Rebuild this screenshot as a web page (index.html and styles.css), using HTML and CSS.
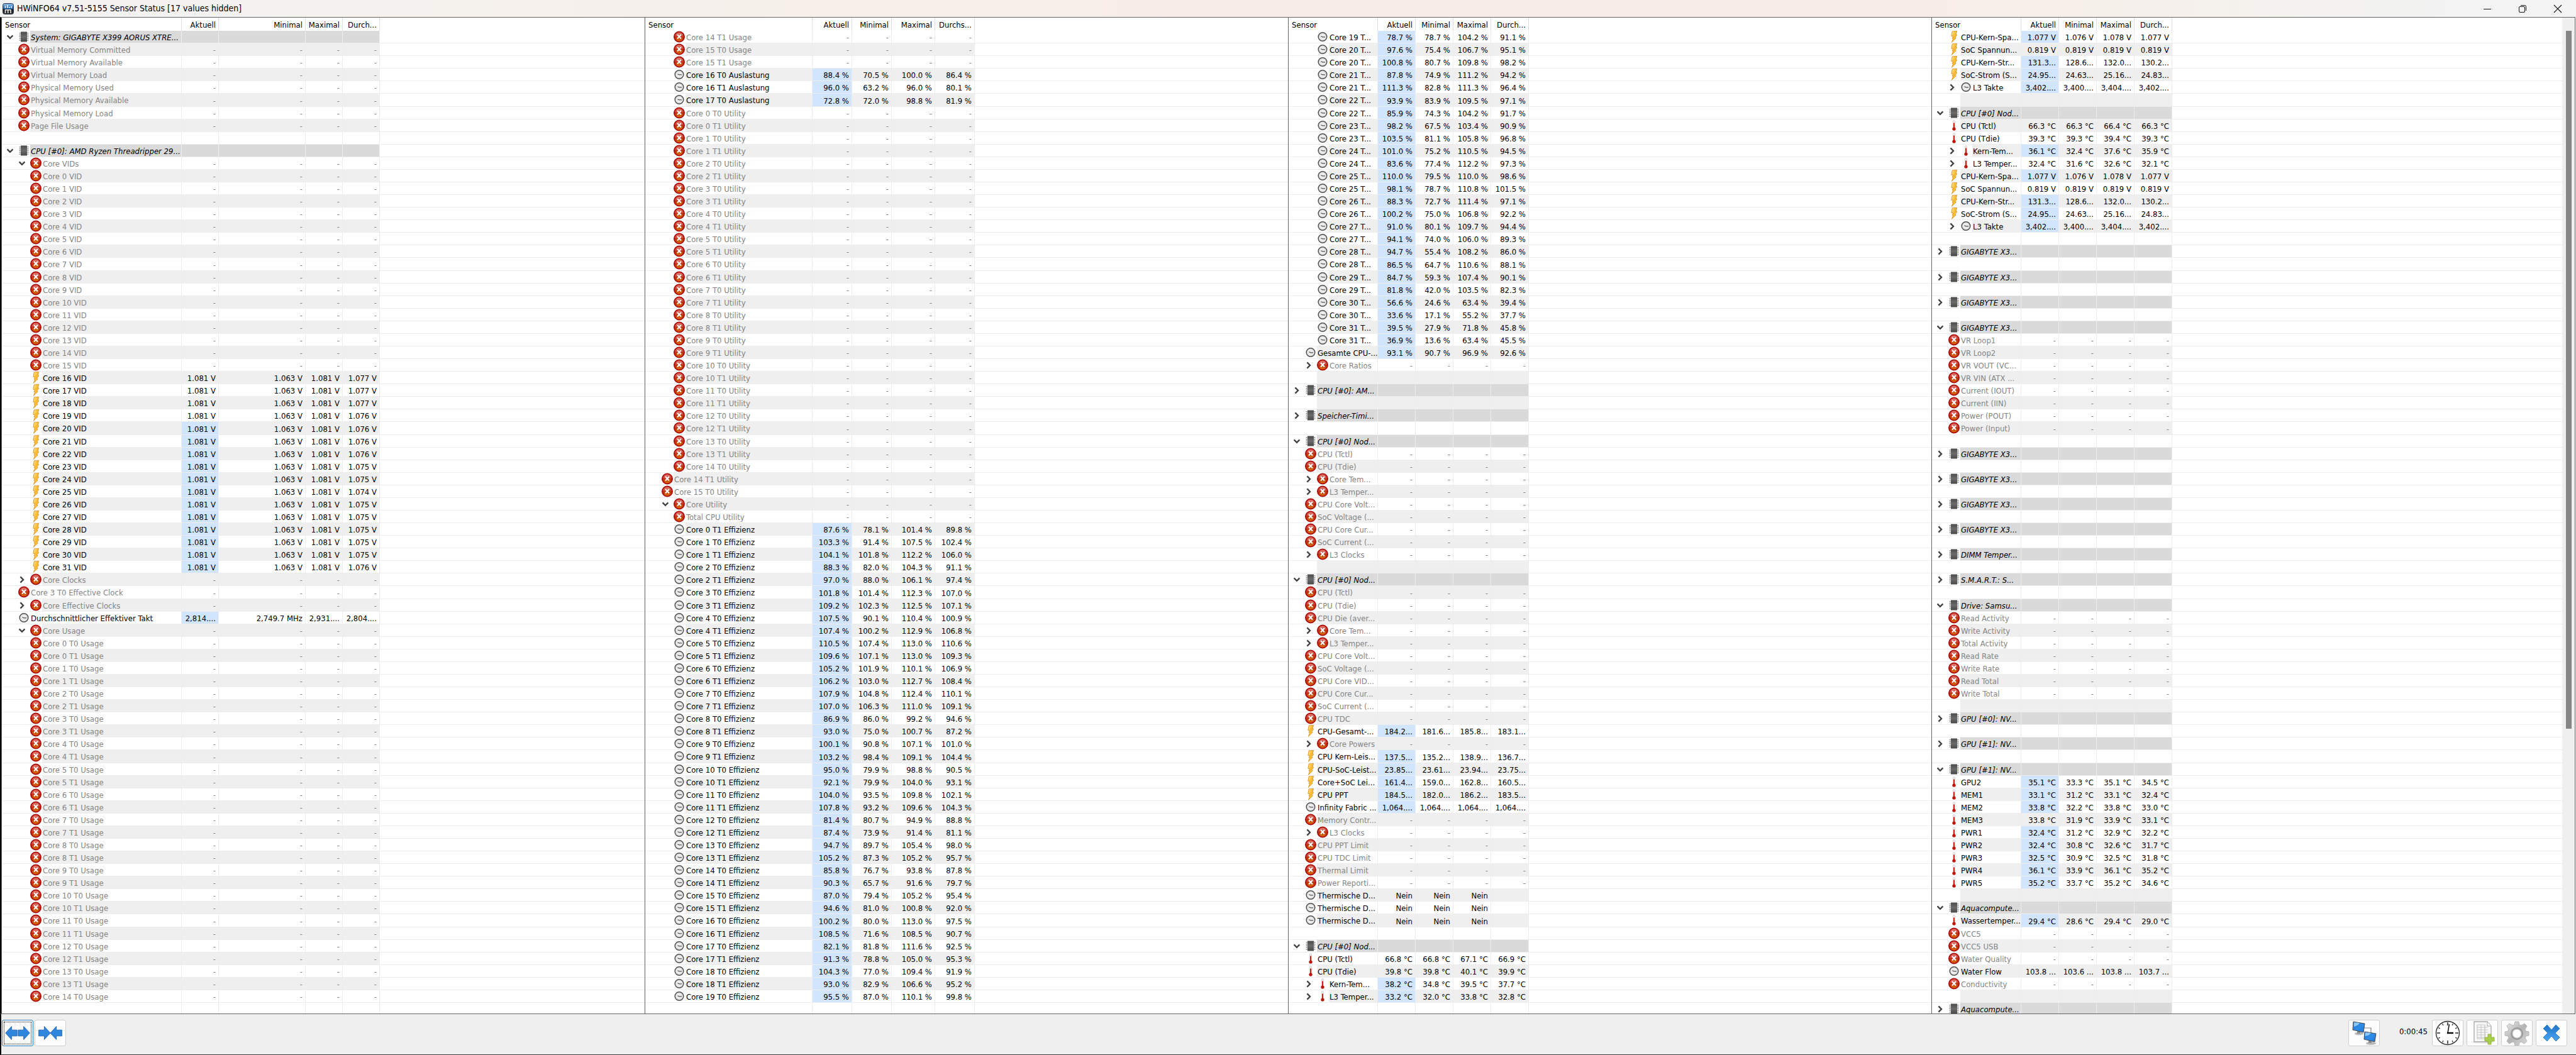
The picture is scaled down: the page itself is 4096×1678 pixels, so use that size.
FILE: index.html
```html
<!DOCTYPE html>
<html lang="de">
<head>
<meta charset="utf-8">
<title>HWiNFO64 v7.51-5155 Sensor Status</title>
<link rel="stylesheet" href="styles.css">
</head>
<body>
<svg class="sprite" aria-hidden="true">
  <defs>
    <linearGradient id="gRed" x1="0" y1="0" x2="0" y2="1"><stop offset="0" stop-color="#e58a80"/><stop offset=".48" stop-color="#c8392b"/><stop offset=".52" stop-color="#b83200"/><stop offset="1" stop-color="#e07a10"/></linearGradient>
    <linearGradient id="gBolt" x1="0" y1="0" x2="1" y2="1"><stop offset="0" stop-color="#ffe9a0"/><stop offset=".5" stop-color="#fcb829"/><stop offset="1" stop-color="#fff0a0"/></linearGradient>
    <linearGradient id="gChip" x1="0" y1="0" x2="0" y2="1"><stop offset="0" stop-color="#4c4c4c"/><stop offset=".5" stop-color="#6a6a6a"/><stop offset="1" stop-color="#484848"/></linearGradient>
    <linearGradient id="gBlue" x1="0" y1="0" x2="0" y2="1"><stop offset="0" stop-color="#1f74c8"/><stop offset="1" stop-color="#4ba6f5"/></linearGradient>
    <linearGradient id="gScreen" x1="0" y1="0" x2="1" y2="1"><stop offset="0" stop-color="#1670cf"/><stop offset=".5" stop-color="#2f8de6"/><stop offset="1" stop-color="#1d78dc"/></linearGradient>
    <linearGradient id="gGear" x1="0" y1="0" x2="1" y2="1"><stop offset="0" stop-color="#ececec"/><stop offset=".5" stop-color="#b4b4b4"/><stop offset="1" stop-color="#dedede"/></linearGradient>
    <linearGradient id="gApp" x1="0" y1="0" x2="0" y2="1"><stop offset="0" stop-color="#8fc0ea"/><stop offset=".5" stop-color="#1c5ea8"/><stop offset=".55" stop-color="#1a1a1a"/><stop offset="1" stop-color="#333"/></linearGradient>
  </defs>
  <symbol id="i-x" viewBox="0 0 18 18"><circle cx="9" cy="9" r="8" fill="url(#gRed)" stroke="#b00d0a" stroke-width="2"/><path d="M6 5.6l6 6.4M12 5.6L6 12" stroke="#fff" stroke-width="2.2" fill="none"/></symbol>
  <symbol id="i-k" viewBox="0 0 18 18"><circle cx="9" cy="9" r="6.8" fill="#ececec" stroke="#4e4e4e" stroke-width="1.5"/><circle cx="9" cy="9" r="5.2" fill="none" stroke="#bdbdbd" stroke-width="1" stroke-dasharray="1 1.7"/><path d="M6.3 8.2L9 9.3h4" stroke="#555" stroke-width="1.2" fill="none"/></symbol>
  <symbol id="i-b" viewBox="0 0 18 18"><path d="M6.2 .4L13.6 0L12 5.6L13.8 6L10.6 10.6L12.3 11.2L5.4 17.8L7.6 12L6 11.4L7.6 8.4L4.8 7.8Z" fill="url(#gBolt)" stroke="#d98a1c" stroke-width=".8"/></symbol>
  <symbol id="i-t" viewBox="0 0 18 18"><rect x="7.3" y="1" width="3.4" height="13" rx="1.7" fill="#ececec" stroke="#c4c4c4" stroke-width=".6"/><path d="M9 5v9" stroke="#cf2512" stroke-width="2"/><circle cx="9" cy="14.6" r="2.7" fill="#be150c"/></symbol>
  <symbol id="i-c" viewBox="0 0 18 18"><path d="M2.6 2.5v14M15.4 2.5v14" stroke="#888" stroke-width="2" stroke-dasharray="1.6 1.2"/><rect x="4" y="1" width="10" height="16" fill="url(#gChip)"/></symbol>
  <symbol id="i-open" viewBox="0 0 12 12"><path d="M1.6 3.4L6 7.8L10.4 3.4" fill="none" stroke="#424242" stroke-width="2.4"/></symbol>
  <symbol id="i-shut" viewBox="0 0 12 12"><path d="M3.4 1.4L8 6L3.4 10.6" fill="none" stroke="#424242" stroke-width="2.4"/></symbol>
</svg>

<header class="titlebar">
  <svg class="app-icon" viewBox="0 0 18 18"><rect x=".5" y=".5" width="17" height="17" rx="3" fill="url(#gApp)" stroke="#2a3a4c"/><path d="M4.5 8V4.500M8 8V3M11 8V6M14 8V4.500" stroke="#fff" stroke-width="1.400"/><path d="M4.500 16v-5.200h8.500V16M8.700 11v5" stroke="#e8e8e8" stroke-width="1.600" fill="none"/></svg>
  <h1 class="title">HWiNFO64 v7.51-5155 Sensor Status [17 values hidden]</h1>
  <div class="window-controls">
    <button aria-label="Minimieren"><svg viewBox="0 0 14 14"><path d="M1 7.500h12" stroke="#111"/></svg></button>
    <button aria-label="Wiederherstellen"><svg viewBox="0 0 14 14" fill="none" stroke="#111"><rect x="1.500" y="3.500" width="9" height="9" rx="1.500"/><path d="M4 1.500h6.500a2 2 0 0 1 2 2V10"/></svg></button>
    <button aria-label="Beenden"><svg viewBox="0 0 14 14"><path d="M1 1l12 12M13 1L1 13" stroke="#111" stroke-width="1.200"/></svg></button>
  </div>
</header>

<main class="panes">
  <section class="pane pane-wide-min" id="pane1"></section>
  <section class="pane pane-wide-max" id="pane2"></section>
  <section class="pane pane-narrow" id="pane3"></section>
  <section class="pane pane-narrow" id="pane4"></section>
</main>

<footer class="toolbar">
  <button class="tool tool-focus" aria-label="Mehr Spalten"><svg viewBox="0 0 48 32"><path d="M2 16L13 4v6.500h10v11H13V28Z M46 16L35 4v6.500H25v11h10V28Z" fill="#2f86dc" stroke="#1c62b4"/></svg></button>
  <button class="tool" aria-label="Weniger Spalten"><svg viewBox="0 0 48 32"><path d="M24 16L13 4v6.500H3v11h10V28Z M24 16L35 4v6.500h10v11H35V28Z" fill="#2f86dc" stroke="#1c62b4"/></svg></button>
  <span class="spacer"></span>
  <button class="tool" aria-label="Netzwerk"><svg viewBox="0 0 40 40"><path d="M19 12h12v10" fill="none" stroke="#8a8a8a" stroke-width="1.200"/><ellipse cx="12" cy="21" rx="7" ry="2.500" fill="#b9b9b9"/><path d="M9 16l5 1v4H9Z" fill="#8f8f8f"/><path d="M3 2l18 3-2 14L2 15Z" fill="url(#gScreen)" stroke="#4a4a4a"/><path d="M3.500 10Q11 8 13 4L4 3Z" fill="#8cc8fa"/><ellipse cx="31" cy="36.500" rx="8" ry="2.500" fill="#b9b9b9"/><path d="M27 31l5 1v4h-5Z" fill="#8f8f8f"/><path d="M21 18l18 3-2 13-17-4Z" fill="url(#gScreen)" stroke="#4a4a4a"/><path d="M21.500 25Q29 24 31 20l-9-1Z" fill="#8cc8fa"/></svg></button>
  <span class="elapsed">0:00:45</span>
  <button class="tool" aria-label="Zurücksetzen"><svg viewBox="0 0 40 40"><circle cx="20" cy="20" r="18.500" fill="#fff" stroke="#222" stroke-width="1.300"/><path d="M20 3v5M20 32v5M3 20h5M32 20h5" stroke="#222" stroke-width="1.500"/><path d="M11.500 5.300l1.500 2.500M28.500 5.300L27 7.800M11.500 34.700l1.500-2.500M28.500 34.700L27 32.200M5.300 11.500L7.800 13M5.300 28.500L7.800 27M34.700 11.500L32.200 13M34.700 28.500L32.200 27" stroke="#222" stroke-width="1.200"/><path d="M20 20L22.500 6" stroke="#111" stroke-width="1.500"/><path d="M19 20h10" stroke="#000" stroke-width="2.400"/></svg></button>
  <button class="tool" aria-label="Protokoll"><svg viewBox="0 0 40 40"><ellipse cx="20" cy="34" rx="18" ry="3" fill="#ececec"/><path d="M7 2h21l6 7v25H7Z" fill="#f7f7f7" stroke="#a8a8a8" stroke-width="1.300"/><path d="M28 2v7h6" fill="#fff" stroke="#a8a8a8"/><path d="M12 7h12v22H12ZM12 11h17M12 15h17M12 19h17M12 23h14M12 27h12M18 7v22M24 7v22" fill="none" stroke="#c6c6c6"/><path d="M29 22h5v5h5v6h-5v5h-5v-5h-5v-6h5Z" fill="#a9cf4e" stroke="#93b83a"/></svg></button>
  <button class="tool" aria-label="Einstellungen"><svg viewBox="0 0 40 40"><path fill-rule="evenodd" d="M17 2h6l1 5 3 1 5-3 4 4-3 5 1 3 5 1v6l-5 1-1 3 3 5-4 4-5-3-3 1-1 5h-6l-1-5-3-1-5 3-4-4 3-5-1-3-5-1v-6l5-1 1-3-3-5 4-4 5 3 3-1ZM20 14a7 7 0 1 0 .1 0Z" fill="url(#gGear)" stroke="#a8a8a8" stroke-width=".8"/><circle cx="20" cy="21" r="9" fill="none" stroke="#8f8f8f" stroke-width="1.400"/></svg></button>
  <button class="tool" aria-label="Schließen"><svg viewBox="0 0 40 40"><path d="M13 7l7 8 7-8 6 6-7 7 7 7-6 6-7-8-7 8-6-6 7-7-7-7Z" fill="url(#gBlue)" stroke="#1f6fc0" stroke-width=".8"/></svg></button>
</footer>
<script src="sensors.js"></script>
</body>
</html>
```
FILE: styles.css
```css
* {
  box-sizing: border-box;
}

body {
  margin: 0;
  height: 100vh;
  display: flex;
  flex-direction: column;
  overflow: hidden;
  background: #efefef;
  color: #000;
  font: 13px/17px "DejaVu Sans Condensed", "Noto Sans", sans-serif;
}

button {
  margin: 0;
  padding: 0;
  border: 0;
  background: none;
}

.sprite {
  position: absolute;
  width: 0;
  height: 0;
}

/* title bar */
.titlebar {
  flex: none;
  height: 27px;
  display: flex;
  align-items: center;
  gap: 5px;
  padding: 0 1px 0 4px;
  background: linear-gradient(90deg, #f3f3f2, #f8eee7 45%, #f8eee7 75%, #f2f3f2 95%);
}

.app-icon {
  width: 18px;
  height: 18px;
}

.title {
  flex: 1;
  margin: 0;
  font-size: 14px;
  font-weight: normal;
}

.window-controls {
  display: flex;
}

.window-controls button {
  width: 56px;
  height: 26px;
  display: grid;
  place-items: center;
}

.window-controls svg {
  width: 14px;
  height: 14px;
}

/* sensor panes */
.panes {
  flex: 1;
  min-height: 0;
  display: grid;
  grid-template-columns: repeat(4, minmax(0, 1fr));
  margin-right: 1px;
  border: 1px solid #646464;
  border-left: 2px solid #000;
  background: #fff;
}

.pane {
  display: flex;
  align-items: flex-start;
  overflow: hidden;
  border-left: 1px solid #646464;
}

.sensors {
  flex: 1;
  width: 100%;
  min-width: 0;
  table-layout: fixed;
  border-collapse: separate;
  border-spacing: 0;
}

.sensors col { width: 60px; }
.sensors col.c-name { width: 142px; }
.sensors col.c-rest { width: auto; }
.pane-wide-min col { width: 59px; }
.pane-wide-min col.c-name { width: 286px; }
.pane-wide-min col.c-min { width: 138px; }
.pane-wide-max col { width: 63px; }
.pane-wide-max col.c-name { width: 266px; }
.pane-wide-max col.c-max { width: 69px; }

.sensors th,
.sensors td {
  height: 20px;
  padding: 2px 4px 0 0;
  border: 0 solid #ededed;
  border-width: 0 1px 1px 0;
  font-weight: normal;
  text-align: right;
  white-space: nowrap;
  overflow: hidden;
}

.sensors tbody tr:nth-child(13n + 6) td {
  height: 21px;
}

.sensors thead th {
  height: 21px;
  border-color: #e0e0e0;
  border-bottom: 0;
}

.sensors thead th:first-child {
  padding-left: 5px;
  text-align: left;
}

.sensors th:last-child,
.sensors td:last-child {
  border-right: 0;
}

.sensors td:first-child {
  padding: 0;
  text-align: left;
}

.entry {
  display: flex;
  align-items: stretch;
  height: 100%;
  min-height: 19px;
}

.level-1 {
  padding-left: 19px;
}

.twisty {
  flex: none;
  width: 25px;
  display: grid;
  place-items: center;
}

.twisty svg {
  width: 12px;
  height: 12px;
}

.icon {
  flex: none;
  width: 20px;
  height: 19px;
  padding: 0 1px;
}

.label {
  flex: 1;
  padding: 2px 0 0 1px;
}

.stripe .label,
.stripe .value {
  background: #efefef;
}

.group .label,
.group .value {
  background: #dadada;
}

.group .label {
  font-style: italic;
}

.off {
  color: #848484;
}

.sensors .hot {
  background: #d1e5fe;
}

/* scroll bar of the last pane */
.scrollbar {
  flex: none;
  align-self: stretch;
  width: 20px;
  padding: 21px 5px 0 6px;
  background: #efefef;
}

.thumb {
  height: 71%;
  background: #858585;
}

/* bottom toolbar */
.toolbar {
  flex: none;
  display: flex;
  align-items: center;
  gap: 5px;
  padding: 9px 14px 13px 1px;
  border-left: 2px solid #000;
  border-bottom: 1px solid #3c3c3c;
}

.tool {
  width: 50px;
  height: 42px;
  display: grid;
  place-items: center;
  border: 1px solid #cfcfcf;
  border-radius: 3px;
  background: #fdfdfd;
}

.tool svg {
  width: 42px;
  height: 40px;
}

.tool-focus {
  margin-right: -3px;
  border-color: #2d7cc4;
  outline: 1px dotted #000;
  outline-offset: -4px;
}

.spacer {
  flex: 1;
}

.elapsed {
  margin: 0 2px 6px 26px;
}
```
FILE: sensors.js
```js
// Row notation: twisty (v open, > closed, . none), icon (c chip, x disabled,
// b voltage, k clock, t temperature), level, name | current | min | max | average.
// "*" marks a value that just changed, "~" a closed group with an odd number of
// hidden rows (the striping runs on through them), "-" a spacer, "/" the list end.

const cores = (from, to, make) => {
  const rows = [];
  for (let i = from; i <= to; i++) rows.push(make(i >> 1, i & 1));
  return rows.join('\n');
};

const vids = ['77', '77', '77', '76', '76', '76', '76', '75', '75', '74', '75', '75', '75', '75', '75', '76'];

const pane1 = `vc0 System: GIGABYTE X399 AORUS XTRE...
.x0 Virtual Memory Committed
.x0 Virtual Memory Available
.x0 Virtual Memory Load
.x0 Physical Memory Used
.x0 Physical Memory Available
.x0 Physical Memory Load
.x0 Page File Usage
-
vc0 CPU [#0]: AMD Ryzen Threadripper 29...
vx1 Core VIDs
${Array.from({ length: 16 }, (_, i) => `.x1 Core ${i} VID`).join('\n')}
${vids.map((v, i) => `.b1 Core ${i + 16} VID|1.081 V${i > 3 ? '*' : ''}|1.063 V|1.081 V|1.0${v} V`).join('\n')}
>x1 Core Clocks
.x0 Core 3 T0 Effective Clock
>x1 Core Effective Clocks
.k0 Durchschnittlicher Effektiver Takt|2,814....*|2,749.7 MHz|2,931....|2,804....
vx1 Core Usage
${cores(0, 28, (c, t) => `.x1 Core ${c} T${t} Usage`)}
/`;

const efficiency = `87.6 78.1 101.4 89.8
103.3 91.4 107.5 102.4
104.1 101.8 112.2 106.0
88.3 82.0 104.3 91.1
97.0 88.0 106.1 97.4
101.8 101.4 112.3 107.0
109.2 102.3 112.5 107.1
107.5 90.1 110.4 100.9
107.4 100.2 112.9 106.8
110.5 107.4 113.0 110.6
109.6 107.1 113.0 109.3
105.2 101.9 110.1 106.9
106.2 103.0 112.7 108.4
107.9 104.8 112.4 110.1
107.0 106.3 111.0 109.1
86.9 86.0 99.2 94.6
93.0 75.0 100.7 87.2
100.1 90.8 107.1 101.0
103.2 98.4 109.1 104.4
95.0 79.9 98.8 90.5
92.1 79.9 104.0 93.1
104.0 93.5 109.8 102.1
107.8 93.2 109.6 104.3
81.4 80.7 94.9 88.8
87.4 73.9 91.4 81.1
94.7 89.7 105.4 98.0
105.2 87.3 105.2 95.7
85.8 76.7 93.8 87.8
90.3 65.7 91.6 79.7
87.0 79.4 105.2 95.4
94.6 81.0 100.8 92.0
100.2 80.0 113.0 97.5
108.5 71.6 108.5 90.7
82.1 81.8 111.6 92.5
91.3 78.8 105.0 95.3
104.3 77.0 109.4 91.9
93.0 82.9 106.6 95.2
95.5 87.0 110.1 99.8
78.7 78.7 104.2 91.1
97.6 75.4 106.7 95.1
100.8 80.7 109.8 98.2
87.8 74.9 111.2 94.2
111.3 82.8 111.3 96.4
93.9 83.9 109.5 97.1
85.9 74.3 104.2 91.7
98.2 67.5 103.4 90.9
103.5 81.1 105.8 96.8
101.0 75.2 110.5 94.5
83.6 77.4 112.2 97.3
110.0 79.5 110.0 98.6
98.1 78.7 110.8 101.5
88.3 72.7 111.4 97.1
100.2 75.0 106.8 92.2
91.0 80.1 109.7 94.4
94.1 74.0 106.0 89.3
94.7 55.4 108.2 86.0
86.5 64.7 110.6 88.1
84.7 59.3 107.4 90.1
81.8 42.0 103.5 82.3
56.6 24.6 63.4 39.4
33.6 17.1 55.2 37.7
39.5 27.9 71.8 45.8
36.9 13.6 63.4 45.5`.split('\n').map(line => {
  const [now, min, max, avg] = line.split(' ');
  return `|${now} %*|${min} %|${max} %|${avg} %`;
});

const pane2 = `.x1 Core 14 T1 Usage
.x1 Core 15 T0 Usage
.x1 Core 15 T1 Usage
.k1 Core 16 T0 Auslastung|88.4 %*|70.5 %|100.0 %|86.4 %
.k1 Core 16 T1 Auslastung|96.0 %*|63.2 %|96.0 %|80.1 %
.k1 Core 17 T0 Auslastung|72.8 %*|72.0 %|98.8 %|81.9 %
${cores(0, 28, (c, t) => `.x1 Core ${c} T${t} Utility`)}
.x0 Core 14 T1 Utility
.x0 Core 15 T0 Utility
vx1 Core Utility
.x1 Total CPU Utility
${cores(1, 38, (c, t) => `.k1 Core ${c} T${t} Effizienz${efficiency[2 * c + t - 1]}`)}
/`;

const pane3 = `${cores(39, 63, (c, t) => `.k1 Core ${c} T...${efficiency[2 * c + t - 1]}`)}
.k0 Gesamte CPU-...|93.1 %*|90.7 %|96.9 %|92.6 %
>x1 Core Ratios
-
>c0 CPU [#0]: AM...
-
>c0 Speicher-Timi...~
-
vc0 CPU [#0] Nod...
.x0 CPU (Tctl)
.x0 CPU (Tdie)
>x1 Core Tem...
>x1 L3 Temper...
.x0 CPU Core Volt...
.x0 SoC Voltage (...
.x0 CPU Core Cur...
.x0 SoC Current (...
>x1 L3 Clocks
-
vc0 CPU [#0] Nod...
.x0 CPU (Tctl)
.x0 CPU (Tdie)
.x0 CPU Die (aver...
>x1 Core Tem...
>x1 L3 Temper...
.x0 CPU Core Volt...
.x0 SoC Voltage (...
.x0 CPU Core VID...
.x0 CPU Core Cur...
.x0 SoC Current (...
.x0 CPU TDC
.b0 CPU-Gesamt-...|184.2...*|181.6...|185.8...|183.1...
>x1 Core Powers
.b0 CPU Kern-Leis...|137.5...*|135.2...|138.9...|136.7...
.b0 CPU-SoC-Leist...|23.85...*|23.61...|23.94...|23.75...
.b0 Core+SoC Lei...|161.4...*|159.0...|162.8...|160.5...
.b0 CPU PPT|184.5...*|182.0...|186.2...|183.5...
.k0 Infinity Fabric ...|1,064....*|1,064....|1,064....|1,064....
.x0 Memory Contr...
>x1 L3 Clocks
.x0 CPU PPT Limit
.x0 CPU TDC Limit
.x0 Thermal Limit
.x0 Power Reporti...
.k0 Thermische D...|Nein|Nein|Nein|
.k0 Thermische D...|Nein|Nein|Nein|
.k0 Thermische D...|Nein|Nein|Nein|
-
vc0 CPU [#0] Nod...
.t0 CPU (Tctl)|66.8 °C|66.8 °C|67.1 °C|66.9 °C
.t0 CPU (Tdie)|39.8 °C|39.8 °C|40.1 °C|39.9 °C
>t1 Kern-Tem...|38.2 °C*|34.8 °C|39.5 °C|37.7 °C
>t1 L3 Temper...|33.2 °C*|32.0 °C|33.8 °C|32.8 °C
/`;

const nodePower = `.b0 CPU-Kern-Spa...|1.077 V*|1.076 V|1.078 V|1.077 V
.b0 SoC Spannun...|0.819 V|0.819 V|0.819 V|0.819 V
.b0 CPU-Kern-Str...|131.3...*|128.6...|132.0...|130.2...
.b0 SoC-Strom (S...|24.95...*|24.63...|25.16...|24.83...
>k1 L3 Takte|3,402....*|3,400....|3,404....|3,402....`;

const pane4 = `${nodePower}
-
vc0 CPU [#0] Nod...
.t0 CPU (Tctl)|66.3 °C|66.3 °C|66.4 °C|66.3 °C
.t0 CPU (Tdie)|39.3 °C|39.3 °C|39.4 °C|39.3 °C
>t1 Kern-Tem...|36.1 °C*|32.4 °C|37.6 °C|35.9 °C
>t1 L3 Temper...|32.4 °C|31.6 °C|32.6 °C|32.1 °C
${nodePower}
-
>c0 GIGABYTE X3...
-
>c0 GIGABYTE X3...
-
>c0 GIGABYTE X3...
-
vc0 GIGABYTE X3...
.x0 VR Loop1
.x0 VR Loop2
.x0 VR VOUT (VC...
.x0 VR VIN (ATX ...
.x0 Current (IOUT)
.x0 Current (IIN)
.x0 Power (POUT)
.x0 Power (Input)
-
>c0 GIGABYTE X3...
-
>c0 GIGABYTE X3...
-
>c0 GIGABYTE X3...
-
>c0 GIGABYTE X3...
-
>c0 DIMM Temper...
-
>c0 S.M.A.R.T.: S...
-
vc0 Drive: Samsu...
.x0 Read Activity
.x0 Write Activity
.x0 Total Activity
.x0 Read Rate
.x0 Write Rate
.x0 Read Total
.x0 Write Total
-
>c0 GPU [#0]: NV...~
-
>c0 GPU [#1]: NV...
-
vc0 GPU [#1]: NV...
.t0 GPU2|35.1 °C*|33.3 °C|35.1 °C|34.5 °C
.t0 MEM1|33.1 °C*|31.2 °C|33.1 °C|32.4 °C
.t0 MEM2|33.8 °C*|32.2 °C|33.8 °C|33.0 °C
.t0 MEM3|33.8 °C|31.9 °C|33.9 °C|33.1 °C
.t0 PWR1|32.4 °C*|31.2 °C|32.9 °C|32.2 °C
.t0 PWR2|32.4 °C*|30.8 °C|32.6 °C|31.7 °C
.t0 PWR3|32.5 °C*|30.9 °C|32.5 °C|31.8 °C
.t0 PWR4|36.1 °C*|33.9 °C|36.1 °C|35.2 °C
.t0 PWR5|35.2 °C*|33.7 °C|35.2 °C|34.6 °C
-
vc0 Aquacompute...
.t0 Wassertemper...|29.4 °C*|28.6 °C|29.4 °C|29.0 °C
.x0 VCC5
.x0 VCC5 USB
.x0 Water Quality
.k0 Water Flow|103.8 ...|103.6 ...|103.8 ...|103.7 ...
.x0 Conductivity
-
>c0 Aquacompute...`;

const use = id => `<svg class="icon"><use href="#i-${id}"/></svg>`;

function buildTable(text, lastTitle) {
  let odd = false;
  const rows = text.split('\n').map(line => {
    let [head, ...values] = line.split('|');
    const blank = head === '-' || head === '/';
    const twisty = blank ? '.' : head[0];
    const icon = blank ? '' : head[1];
    const level = blank ? '0' : head[2];
    let name = blank ? '' : head.slice(4);
    const stripe = odd && head !== '/';
    odd = !odd;
    if (name.endsWith('~')) {
      name = name.slice(0, -1);
      odd = !odd;
    }
    if (icon === 'x') values = ['-', '-', '-', '-'];
    while (values.length < 4) values.push('');
    const cls = icon === 'c' ? 'group' : (stripe ? 'stripe' : '') + (icon === 'x' ? ' off' : '');
    const toggle = twisty === '.'
      ? '<span class="twisty"></span>'
      : `<button class="twisty" aria-label="Gruppe umschalten"><svg><use href="#i-${twisty === 'v' ? 'open' : 'shut'}"/></svg></button>`;
    const cells = values.map(v => v.endsWith('*')
      ? `<td class="value hot">${v.slice(0, -1)}</td>`
      : `<td class="value">${v}</td>`).join('');
    return `<tr class="${cls}"><td><div class="entry level-${level}">${toggle}${icon ? use(icon) : '<span class="icon"></span>'}<span class="label">${name}</span></div></td>${cells}<td></td></tr>`;
  }).join('');
  return `<table class="sensors"><colgroup><col class="c-name"><col><col class="c-min"><col class="c-max"><col><col class="c-rest"></colgroup>
<thead><tr><th>Sensor</th><th>Aktuell</th><th>Minimal</th><th>Maximal</th><th>${lastTitle}</th><th></th></tr></thead>
<tbody>${rows}</tbody></table>`;
}

document.getElementById('pane1').innerHTML = buildTable(pane1, 'Durch...');
document.getElementById('pane2').innerHTML = buildTable(pane2, 'Durchs...');
document.getElementById('pane3').innerHTML = buildTable(pane3, 'Durch...');
document.getElementById('pane4').innerHTML = buildTable(pane4, 'Durch...') +
  '<div class="scrollbar"><div class="thumb"></div></div>';
```
